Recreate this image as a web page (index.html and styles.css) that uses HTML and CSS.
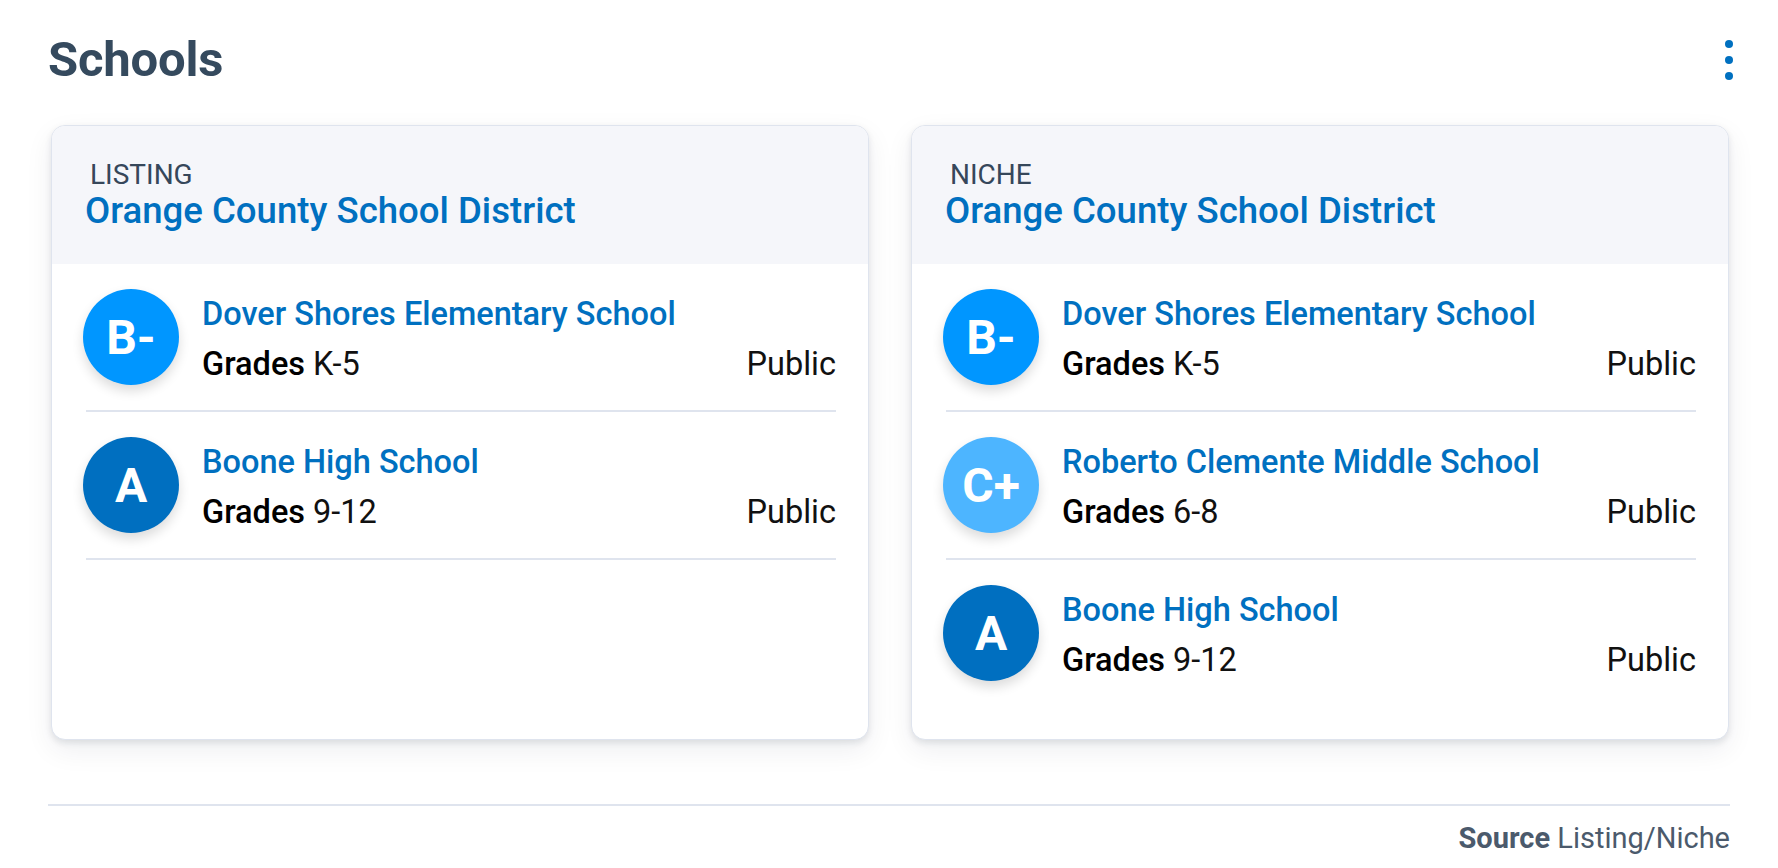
FILE: index.html
```html
<!DOCTYPE html>
<html lang="en">
<head>
<meta charset="utf-8">
<title>Schools</title>
<link rel="stylesheet" href="styles.css">
</head>
<body>
<div class="page">
  <div class="title-row">
    <h1 class="title">Schools</h1>
    <svg class="more" width="8" height="40" viewBox="0 0 8 40" aria-hidden="true">
      <circle cx="4" cy="4" r="4" fill="#0070c0"/>
      <circle cx="4" cy="20" r="4" fill="#0070c0"/>
      <circle cx="4" cy="36" r="4" fill="#0070c0"/>
    </svg>
  </div>

  <div class="cards">
    <div class="card">
      <div class="card-head">
        <div class="source-label">LISTING</div>
        <div class="district">Orange County School District</div>
      </div>
      <div class="card-body">
        <div class="row divided">
          <div class="grade grade-b">B-</div>
          <div class="info">
            <div class="name">Dover Shores Elementary School</div>
            <div class="meta"><span><b>Grades</b> K-5</span><span>Public</span></div>
          </div>
        </div>
        <div class="row divided">
          <div class="grade grade-a">A</div>
          <div class="info">
            <div class="name">Boone High School</div>
            <div class="meta"><span><b>Grades</b> 9-12</span><span>Public</span></div>
          </div>
        </div>
      </div>
    </div>

    <div class="card">
      <div class="card-head">
        <div class="source-label">NICHE</div>
        <div class="district">Orange County School District</div>
      </div>
      <div class="card-body">
        <div class="row divided">
          <div class="grade grade-b">B-</div>
          <div class="info">
            <div class="name">Dover Shores Elementary School</div>
            <div class="meta"><span><b>Grades</b> K-5</span><span>Public</span></div>
          </div>
        </div>
        <div class="row divided">
          <div class="grade grade-c">C+</div>
          <div class="info">
            <div class="name">Roberto Clemente Middle School</div>
            <div class="meta"><span><b>Grades</b> 6-8</span><span>Public</span></div>
          </div>
        </div>
        <div class="row">
          <div class="grade grade-a">A</div>
          <div class="info">
            <div class="name">Boone High School</div>
            <div class="meta"><span><b>Grades</b> 9-12</span><span>Public</span></div>
          </div>
        </div>
      </div>
    </div>
  </div>

  <div class="footer">
    <span><b>Source</b> Listing/Niche</span>
  </div>
</div>
</body>
</html>
```

FILE: styles.css
```css
* { box-sizing: border-box; }

html, body {
  margin: 0;
  padding: 0;
  background: #ffffff;
  font-family: Roboto, "Liberation Sans", Arial, sans-serif;
}

.page {
  padding: 32px 48px 0 48px;
}

.title-row {
  display: flex;
  justify-content: space-between;
  align-items: center;
  height: 56px;
}

.title {
  margin: 0;
  font-size: 49px;
  line-height: 56px;
  font-weight: 700;
  color: #354a5e;
  letter-spacing: -0.2px;
}

.more {
  display: block;
  margin-right: -3px;
}

.cards {
  display: grid;
  grid-template-columns: 1fr 1fr;
  gap: 42px;
  padding: 0 1px 0 3px;
  margin-top: 37px;
}

.card {
  background: #ffffff;
  border: 1px solid #dfe4ee;
  border-radius: 14px;
  overflow: hidden;
  box-shadow: 0 3px 6px rgba(20, 30, 50, 0.10), 0 10px 28px rgba(20, 30, 50, 0.07);
}

.card-head {
  background: #f5f6fa;
  padding: 33px 34px 33px 33px;
}

.source-label {
  font-size: 28px;
  line-height: 32px;
  color: #36475a;
  padding-left: 5px;
}

.district {
  font-size: 36.6px;
  line-height: 40px;
  font-weight: 500;
  color: #0070c0;
}

.card-body {
  padding: 0 32px 33px 34px;
}

.row {
  display: flex;
  align-items: center;
  gap: 23px;
  padding: 21.5px 0 21.5px 0;
}

.row.divided {
  border-bottom: 2px solid #dfe4ee;
}

.grade {
  flex: none;
  width: 96px;
  height: 96px;
  margin-left: -3px;
  border-radius: 50%;
  display: flex;
  align-items: center;
  justify-content: center;
  color: #ffffff;
  font-size: 48px;
  font-weight: 700;
  box-shadow: 0 6px 12px rgba(0, 0, 0, 0.14);
}

.grade-b { background: #0096ff; }
.grade-a { background: #006fc0; }
.grade-c { background: #4db5ff; }

.info {
  flex: 1;
  min-width: 0;
  padding-top: 3px;
}

.name {
  font-size: 32.5px;
  line-height: 50px;
  font-weight: 500;
  color: #0070c0;
}

.meta {
  display: flex;
  justify-content: space-between;
  font-size: 32.5px;
  line-height: 50px;
  color: #111111;
}

.meta b { font-weight: 500; color: #000; }

.footer {
  margin-top: 64px;
  border-top: 2px solid #dfe4ee;
  padding-top: 12px;
  display: flex;
  justify-content: flex-end;
  font-size: 29px;
  line-height: 40px;
  color: #4b5a6c;
}

.footer b { font-weight: 700; }
```
